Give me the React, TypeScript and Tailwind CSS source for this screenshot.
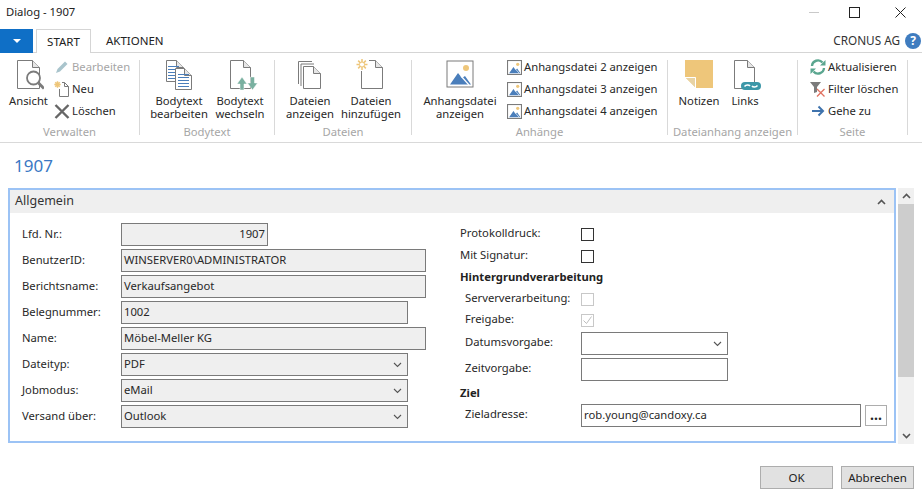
import React from 'react';

const STROKE = '#7b7b7b';
const BLUE = '#4a7ebb';
const SUN = '#eec67a';
const TEAL = '#3c97a8';
const MINT = '#79b0a0';

function Doc({ x = 0.5, y = 0.5, w = 21, h = 28 }: { x?: number; y?: number; w?: number; h?: number }) {
  const f = 7;
  return (
    <>
      <path d={`M${x} ${y}H${x + w - f}L${x + w} ${y + f}V${y + h}H${x}Z`} fill="#fff" stroke={STROKE} />
      <path d={`M${x + w - f} ${y}V${y + f}H${x + w}`} fill="#e6e6e6" stroke={STROKE} />
    </>
  );
}

function Spark({ cx, cy, r }: { cx: number; cy: number; r: number }) {
  const d = r * 0.7;
  return (
    <path
      d={`M${cx - r} ${cy}H${cx + r}M${cx} ${cy - r}V${cy + r}M${cx - d} ${cy - d}L${cx + d} ${cy + d}M${cx - d} ${cy + d}L${cx + d} ${cy - d}`}
      stroke={SUN}
      strokeWidth="1.5"
      fill="none"
    />
  );
}

const AnsichtIcon = () => (
  <svg width="30" height="30" viewBox="0 0 30 30">
    <Doc x={3.5} y={0.5} w={22} h={28} />
    <circle cx="19.5" cy="18" r="6.5" fill="#fff" stroke={STROKE} strokeWidth="1.8" />
    <path d="M24.5 23L30 28.5" stroke={STROKE} strokeWidth="3" />
  </svg>
);

const BodyEditIcon = () => {
  const lines = (x: number, y: number, n: number, w: number) =>
    Array.from({ length: n }, (_, i) => <path key={i} d={`M${x} ${y + i * 3 + 0.5}h${w}`} stroke={BLUE} />);
  return (
    <svg width="28" height="31" viewBox="0 0 28 31">
      <Doc x={1.5} y={0.5} w={17} h={21} />
      {lines(3, 6, 5, 11)}
      <Doc x={10.5} y={8.5} w={16} h={21} />
      {lines(13, 14, 5, 11)}
    </svg>
  );
};

const BodySwapIcon = () => (
  <svg width="30" height="30" viewBox="0 0 30 30" className="overflow-visible">
    <Doc x={5.5} y={0.5} w={20} h={28} />
    <path d="M17 17L22 24H19V30H15V24H12Z" fill={MINT} stroke="#fff" strokeWidth="0.5" />
    <path d="M27.5 30L22.5 23H25.5V17H29.5V23H32.5Z" fill={MINT} stroke="#fff" strokeWidth="0.5" />
  </svg>
);

const FilesIcon = () => (
  <svg width="26" height="29" viewBox="0 0 26 29">
    <path d="M1.5 24V1.5H15M4 26V4H17" fill="none" stroke={STROKE} />
    <Doc x={6.5} y={6.5} w={17} h={22} />
  </svg>
);

const FileAddIcon = () => (
  <svg width="30" height="32" viewBox="0 0 30 32">
    <Doc x={5.5} y={3.5} w={21} h={28} />
    <rect x="0" y="1" width="13" height="13" fill="#fff" />
    <Spark cx={6} cy={7.5} r={5.5} />
    <circle cx="6" cy="7.5" r="2.5" fill="#fff" stroke={SUN} />
  </svg>
);

const ImageIcon = ({ size = 28 }: { size?: number }) => (
  <svg width={size} height={size} viewBox="0 0 28 28">
    <rect x="1" y="1" width="26" height="26" fill="#fff" stroke={STROKE} strokeWidth={size > 20 ? 1 : 2} />
    <circle cx="20" cy="8" r="3" fill={SUN} />
    <path d="M4 24.5L12 13L16 18L19 16L25 24.5Z" fill={BLUE} />
    <path d="M15 16L23 25" stroke="#fff" strokeWidth="1.2" />
  </svg>
);

const NoteIcon = () => (
  <svg width="28" height="28" viewBox="0 0 28 28">
    <path d="M0 0H28V28H11L0 17Z" fill={SUN} />
    <path d="M0 17H11V28Z" fill="#e8d3a4" />
    <path d="M0 17.5H10.5V28" fill="none" stroke="#fff" />
  </svg>
);

const LinkIcon = () => (
  <svg width="30" height="30" viewBox="0 0 30 30" className="overflow-visible">
    <Doc x={4.5} y={0.5} w={20} h={28} />
    <rect x="11" y="22" width="20" height="8" rx="4" fill={TEAL} />
    <path d="M14.5 26.5C16 24.5 19 24.5 20 26M22 26C23 27.5 26 27.5 27.5 25.5" fill="none" stroke="#fff" strokeWidth="1.5" />
  </svg>
);

const PencilIcon = () => (
  <svg width="16" height="16" viewBox="0 0 16 16">
    <path d="M2 14L3.5 10L11 2.5L13.5 5L6 12.5Z" fill="#a9c4cc" />
  </svg>
);

const NewIcon = () => (
  <svg width="16" height="16" viewBox="0 0 16 16">
    <path d="M5.5 1.5H10.5L14.5 5.5V15.5H5.5Z" fill="#fff" stroke={STROKE} />
    <path d="M10.5 1.5V5.5H14.5" fill="none" stroke={STROKE} />
    <rect x="0" y="0" width="8" height="8" fill="#fff" />
    <Spark cx={3.5} cy={3.5} r={3.2} />
  </svg>
);

const DeleteIcon = () => (
  <svg width="16" height="16" viewBox="0 0 16 16">
    <path d="M1.5 2L14.5 15M14.5 2L1.5 15" stroke="#666" strokeWidth="2.4" />
  </svg>
);

const RefreshIcon = () => (
  <svg width="16" height="16" viewBox="0 0 16 16" fill="none">
    <path d="M2 7A6 6 0 0 1 12.5 3.5" stroke="#5aa68f" strokeWidth="2.4" />
    <path d="M10 6.5H15.5V1Z" fill="#5aa68f" />
    <path d="M14 9A6 6 0 0 1 3.5 12.5" stroke="#5aa68f" strokeWidth="2.4" />
    <path d="M6 9.5H0.5V15Z" fill="#5aa68f" />
  </svg>
);

const FilterClearIcon = () => (
  <svg width="16" height="16" viewBox="0 0 16 16" fill="none">
    <path d="M0 1H11L7 6V11L4 12V6Z" fill="#7b7b7b" />
    <path d="M7 8L14.5 15.5M14.5 8L7 15.5" stroke="#e0705f" strokeWidth="1.3" />
  </svg>
);

const GoToIcon = () => (
  <svg width="16" height="16" viewBox="0 0 16 16" fill="none">
    <path d="M2 8H12.5M8.5 3.5L13 8L8.5 12.5" stroke="#3f73ad" strokeWidth="2" />
  </svg>
);

const Chevron = ({ up = false, thin = false, className = '' }: { up?: boolean; thin?: boolean; className?: string }) => (
  <svg width="9" height="6" viewBox="0 0 9 6" className={className} fill="none">
    <path d={up ? 'M1 5L4.5 1.5L8 5' : 'M1 1L4.5 4.5L8 1'} stroke="#555" strokeWidth={thin ? 1.1 : 1.6} />
  </svg>
);

function BigButton({ icon, lines, width }: { icon: React.ReactNode; lines: string[]; width: string }) {
  return (
    <div className={`flex flex-col items-center ${width}`}>
      <div className="h-[34px] flex justify-center items-start">{icon}</div>
      {lines.map((l) => (
        <div key={l} className="h-[13px] leading-[13px] whitespace-nowrap">{l}</div>
      ))}
    </div>
  );
}

function SmallButton({ icon, label, muted = false }: { icon: React.ReactNode; label: string; muted?: boolean }) {
  return (
    <div className={`h-[22px] flex items-center gap-[2px] whitespace-nowrap ${muted ? 'text-[#a6a6a6]' : ''}`}>
      <div className="w-[16px] h-[16px] flex items-center justify-center">{icon}</div>
      {label}
    </div>
  );
}

function Group({ label, width, children }: { label: string; width: string; children: React.ReactNode }) {
  return (
    <div className={`h-[75px] border-r border-[#d9d9d9] flex-none ${width}`}>
      <div className="h-[65px] flex">{children}</div>
      <div className="h-[14px] leading-[14px] text-center text-[#a6a6a6] whitespace-nowrap">{label}</div>
    </div>
  );
}

function TextField({ value, width, right = false, grey = true, chevron = false }: { value?: string; width: string; right?: boolean; grey?: boolean; chevron?: boolean }) {
  return (
    <div className={`h-[23px] flex-none border border-[#7a7a7a] flex items-center px-[2px] ${width} ${grey ? 'bg-[#efefef]' : 'bg-white'} ${right ? 'justify-end' : 'justify-between'}`}>
      <span className="whitespace-nowrap">{value}</span>
      {chevron && <Chevron thin className="mr-[3px] mt-[1px]" />}
    </div>
  );
}

function LeftRow({ label, ...field }: { label: string; value: string; width: string; right?: boolean; chevron?: boolean }) {
  return (
    <div className="flex items-center">
      <div className="w-[99px] flex-none whitespace-nowrap">{label}</div>
      <TextField {...field} />
    </div>
  );
}

function RightRow({ label, height, indent = false, children }: { label: string; height: string; indent?: boolean; children: React.ReactNode }) {
  return (
    <div className={`flex items-center ${height}`}>
      <div className={`w-[121px] flex-none whitespace-nowrap pb-[2px] ${indent ? 'pl-[5px]' : ''}`}>{label}</div>
      {children}
    </div>
  );
}

const Check = ({ disabled = false, checked = false }: { disabled?: boolean; checked?: boolean }) => (
  <div className={`w-[13px] h-[13px] border flex items-center justify-center ${disabled ? 'border-[#c8c8c8]' : 'border-[#333]'}`}>
    {checked && (
      <svg width="11" height="11" viewBox="0 0 11 11" fill="none">
        <path d="M1.5 5.5L4.5 8.5L9.5 1.5" stroke="#bdbdbd" />
      </svg>
    )}
  </div>
);

export default function App() {
  return (
    <div className="w-[922px] h-[495px] overflow-hidden bg-white text-[#282828] text-[11.25px] font-['Noto_Sans',sans-serif]">
      {/* title bar */}
      <div className="h-[29px] flex items-center pl-[6px]">
        <span className="text-[11.25px] text-[#222] -mt-[5px]">Dialog - 1907</span>
        <div className="ml-auto flex items-center -mt-[5px] pr-[16px]">
          <div className="w-[10px] h-px bg-[#c9c9c9] mr-[30px]" />
          <div className="w-[11px] h-[11px] border border-[#222] mr-[35px]" />
          <svg width="11" height="11" viewBox="0 0 11 11">
            <path d="M0.5 0.5L10.5 10.5M10.5 0.5L0.5 10.5" stroke="#222" />
          </svg>
        </div>
      </div>

      {/* tabs */}
      <div className="h-[24px] border-b border-[#d5d5d5] flex items-stretch text-[11.5px]">
        <div className="w-[33px] bg-[#0f6fc6] flex items-center justify-center -mb-px">
          <div className="w-0 h-0 border-l-[4px] border-r-[4px] border-t-[4px] border-l-transparent border-r-transparent border-t-white" />
        </div>
        <div className="ml-[3px] w-[55px] h-[24px] border border-b-0 border-[#d5d5d5] bg-white flex items-center justify-center text-[#222]">START</div>
        <div className="ml-[15px] flex items-center text-[#222]">AKTIONEN</div>
        <div className="ml-auto flex items-center pr-[1px]">
          <span className="text-[#333] text-[11.75px]">CRONUS AG</span>
          <div className="ml-[5px] w-[16px] h-[16px] rounded-full bg-[#3f7cbf] text-white font-bold text-[12px] leading-none flex items-center justify-center">?</div>
        </div>
      </div>

      {/* ribbon */}
      <div className="h-[90px] border-b border-[#d9d9d9] pt-[7px] flex">
        <Group label="Verwalten" width="w-[140px]">
          <div className="pl-[9px] flex">
            <BigButton width="w-[39px]" icon={<AnsichtIcon />} lines={['Ansicht']} />
            <div className="ml-[6px] -mt-[4px]">
              <SmallButton muted icon={<PencilIcon />} label="Bearbeiten" />
              <SmallButton icon={<NewIcon />} label="Neu" />
              <SmallButton icon={<DeleteIcon />} label="Löschen" />
            </div>
          </div>
        </Group>
        <Group label="Bodytext" width="w-[135px]">
          <div className="pl-[7px] flex">
            <BigButton width="w-[64px]" icon={<BodyEditIcon />} lines={['Bodytext', 'bearbeiten']} />
            <BigButton width="w-[58px]" icon={<BodySwapIcon />} lines={['Bodytext', 'wechseln']} />
          </div>
        </Group>
        <Group label="Dateien" width="w-[137px]">
          <div className="pl-[5px] flex">
            <BigButton width="w-[60px]" icon={<FilesIcon />} lines={['Dateien', 'anzeigen']} />
            <BigButton width="w-[62px]" icon={<div className="-mt-[3px]"><FileAddIcon /></div>} lines={['Dateien', 'hinzufügen']} />
          </div>
        </Group>
        <Group label="Anhänge" width="w-[256px]">
          <div className="pl-[8px] flex">
            <BigButton width="w-[80px]" icon={<ImageIcon />} lines={['Anhangsdatei', 'anzeigen']} />
            <div className="ml-[6px] -mt-[4px]">
              <SmallButton icon={<ImageIcon size={15} />} label="Anhangsdatei 2 anzeigen" />
              <SmallButton icon={<ImageIcon size={15} />} label="Anhangsdatei 3 anzeigen" />
              <SmallButton icon={<ImageIcon size={15} />} label="Anhangsdatei 4 anzeigen" />
            </div>
          </div>
        </Group>
        <Group label="Dateianhang anzeigen" width="w-[130px]">
          <div className="pl-[4px] flex">
            <BigButton width="w-[54px]" icon={<NoteIcon />} lines={['Notizen']} />
            <BigButton width="w-[38px]" icon={<LinkIcon />} lines={['Links']} />
          </div>
        </Group>
        <Group label="Seite" width="w-[110px]">
          <div className="pl-[12px] -mt-[4px]">
            <SmallButton icon={<RefreshIcon />} label="Aktualisieren" />
            <SmallButton icon={<FilterClearIcon />} label="Filter löschen" />
            <SmallButton icon={<GoToIcon />} label="Gehe zu" />
          </div>
        </Group>
      </div>

      {/* page heading */}
      <div className="h-[45px] pl-[14px] pt-[12px] text-[17px] leading-[22px] text-[#3a78c4]">1907</div>

      {/* fast tab + scrollbar */}
      <div className="flex pl-[8px]">
        <div className="w-[888px] h-[255px] border-2 border-[#9cc3f5] flex-none">
          <div className="h-[23px] bg-[#efefef] flex items-center justify-between pl-[5px] pr-[8px]">
            <span className="text-[12.5px] text-[#333]">Allgemein</span>
            <Chevron up />
          </div>
          <div className="flex pt-[10px] pl-[12px]">
            <div className="w-[438px] flex-none flex flex-col gap-[3px]">
              <LeftRow label="Lfd. Nr.:" value="1907" width="w-[147px]" right />
              <LeftRow label="BenutzerID:" value="WINSERVER0\ADMINISTRATOR" width="w-[305px]" />
              <LeftRow label="Berichtsname:" value="Verkaufsangebot" width="w-[305px]" />
              <LeftRow label="Belegnummer:" value="1002" width="w-[287px]" />
              <LeftRow label="Name:" value="Möbel-Meller KG" width="w-[305px]" />
              <LeftRow label="Dateityp:" value="PDF" width="w-[287px]" chevron />
              <LeftRow label="Jobmodus:" value="eMail" width="w-[287px]" chevron />
              <LeftRow label="Versand über:" value="Outlook" width="w-[287px]" chevron />
            </div>
            <div className="flex-1">
              <RightRow label="Protokolldruck:" height="h-[22px]"><Check /></RightRow>
              <RightRow label="Mit Signatur:" height="h-[22px]"><Check /></RightRow>
              <div className="h-[22px] flex items-center font-bold text-[#222] pb-[2px]">Hintergrundverarbeitung</div>
              <RightRow label="Serververarbeitung:" height="h-[20px]" indent><Check disabled /></RightRow>
              <RightRow label="Freigabe:" height="h-[22px]" indent><Check disabled checked /></RightRow>
              <RightRow label="Datumsvorgabe:" height="h-[23px] mt-[1px]" indent>
                <TextField width="w-[147px]" grey={false} chevron />
              </RightRow>
              <RightRow label="Zeitvorgabe:" height="h-[23px] mt-[3px]" indent>
                <TextField width="w-[147px]" grey={false} />
              </RightRow>
              <div className="h-[22px] mt-[2px] flex items-center font-bold text-[#222] pb-[2px]">Ziel</div>
              <RightRow label="Zieladresse:" height="h-[23px] -mt-[1px]" indent>
                <div className="flex items-center">
                  <TextField width="w-[280px]" grey={false} value="rob.young@candoxy.ca" />
                  <div className="ml-[4px] w-[22px] h-[21px] border border-[#adadad] bg-white flex items-center justify-center font-bold text-[14px] leading-none pb-[1px]">...</div>
                </div>
              </RightRow>
            </div>
          </div>
        </div>
        <div className="ml-[2px] w-[16px] h-[256px] flex-none bg-[#f0f0f0] flex flex-col">
          <div className="h-[16px] flex items-center justify-center"><Chevron up /></div>
          <div className="h-[173px] bg-[#cdcdcd]" />
          <div className="h-[67px] flex items-end justify-center pb-[5px]"><Chevron /></div>
        </div>
      </div>

      {/* footer */}
      <div className="flex justify-end gap-[8px] pt-[22px] pr-[8px] text-[11.5px]">
        <div className="w-[73px] h-[23px] bg-[#e1e1e1] border border-[#adadad] flex items-center justify-center text-[#222]">OK</div>
        <div className="w-[73px] h-[23px] bg-[#e1e1e1] border border-[#adadad] flex items-center justify-center text-[#222]">Abbrechen</div>
      </div>
    </div>
  );
}
